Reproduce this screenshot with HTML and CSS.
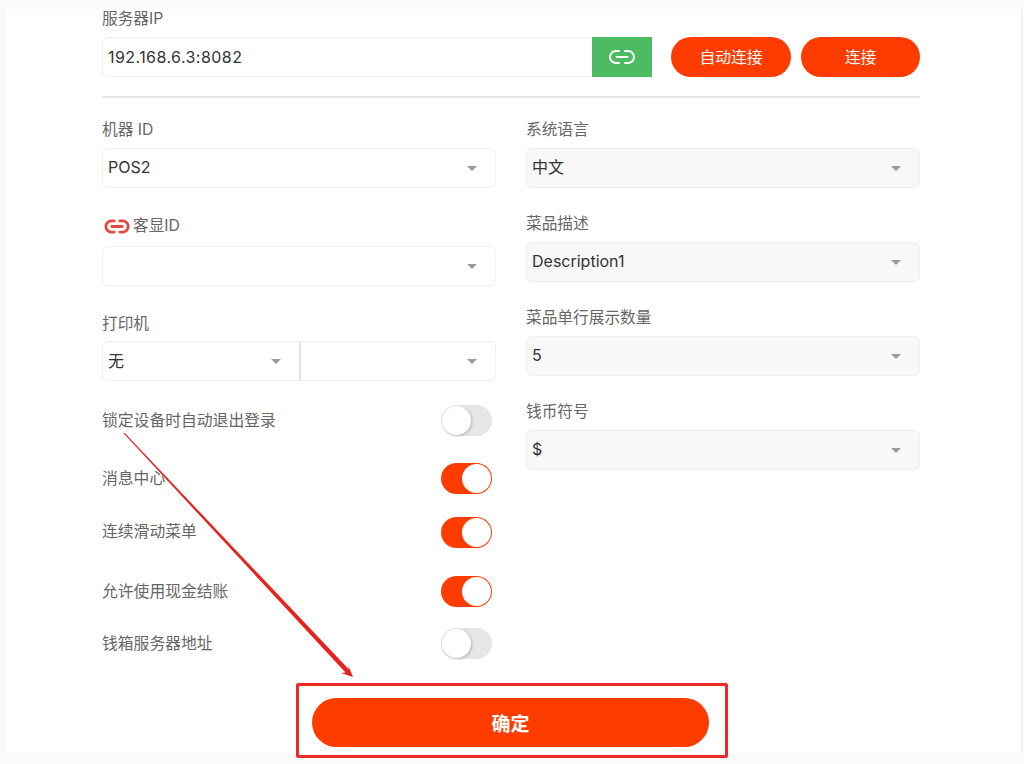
FILE: index.html
```html
<!DOCTYPE html>
<html lang="zh-CN">
<head>
<meta charset="utf-8">
<title>设置</title>
<link rel="stylesheet" href="styles.css">
</head>
<body>
<main class="card">
  <section class="server">
    <div class="label label-server">服务器IP</div>
    <div class="server-row">
      <div class="ip-box">
        <div class="ip-value">192.168.6.3:8082</div>
        <div class="ip-link">
          <svg class="link-icon" viewBox="0 0 28 16" width="28" height="16"><path d="M11 2H8a6 6 0 0 0 0 12h3M17 2h3a6 6 0 0 1 0 12h-3M8.500 8h11" fill="none" stroke="#fff" stroke-width="2" stroke-linecap="round"/></svg>
        </div>
      </div>
      <button class="pill">自动连接</button>
      <button class="pill pill-last">连接</button>
    </div>
  </section>
  <hr class="divider">
  <section class="columns">
    <div class="col">
      <div class="label">机器 ID</div>
      <div class="select select-a"><span>POS2</span><i class="caret"></i></div>
      <div class="label label-icon">
        <svg class="link-icon-red" viewBox="0 0 28 16" width="26" height="15"><path d="M11 2H8a6 6 0 0 0 0 12h3M17 2h3a6 6 0 0 1 0 12h-3M8.500 8h11" fill="none" stroke="#e5483f" stroke-width="3" stroke-linecap="round"/></svg>客显ID
      </div>
      <div class="select select-b"><span></span><i class="caret"></i></div>
      <div class="label">打印机</div>
      <div class="select-pair">
        <div class="pair-item pair-first"><span>无</span><i class="caret"></i></div>
        <div class="pair-item pair-second"><span></span><i class="caret"></i></div>
      </div>
      <div class="switch-list">
        <div class="switch-row row-1"><span>锁定设备时自动退出登录</span><i class="switch"></i></div>
        <div class="switch-row row-2"><span>消息中心</span><i class="switch on"></i></div>
        <div class="switch-row row-3"><span>连续滑动菜单</span><i class="switch on"></i></div>
        <div class="switch-row row-4"><span>允许使用现金结账</span><i class="switch on"></i></div>
        <div class="switch-row row-5"><span>钱箱服务器地址</span><i class="switch"></i></div>
      </div>
    </div>
    <div class="col">
      <div class="label">系统语言</div>
      <div class="select filled"><span class="cjk">中文</span><i class="caret"></i></div>
      <div class="label">菜品描述</div>
      <div class="select filled"><span>Description1</span><i class="caret"></i></div>
      <div class="label">菜品单行展示数量</div>
      <div class="select filled"><span>5</span><i class="caret"></i></div>
      <div class="label">钱币符号</div>
      <div class="select filled"><span>$</span><i class="caret"></i></div>
    </div>
  </section>
  <div class="footer"><button class="confirm">确定</button></div>
</main>
<div class="mark-box"></div>
<svg class="mark-arrow" viewBox="0 0 1024 764" width="1024" height="764">
  <polygon points="123.500,433.300 124.500,432.700 349,669.500 348,665 353,677 341,673 345.500,672.500" fill="#e8211d"/>
</svg>
</body>
</html>
```
FILE: styles.css
```css
* { box-sizing: border-box; }
html, body { margin: 0; height: 764px; overflow: hidden; }
body {
  position: relative;
  background: #fafafd;
  padding: 9px 2px 11px 4px;
  font-family: Inter, "Noto Sans CJK SC", sans-serif;
  color: #333;
}
.card {
  height: 744px;
  background: #fff;
  border-left: 1px solid #f1f1f1;
  border-right: 1px solid #efeff2;
  padding: 0 101px 0 97px;
}
.label {
  height: 20px;
  line-height: 20px;
  font-size: 15.7px;
  color: #666;
}
.columns .label { line-height: 22px; }
.label-server { margin-bottom: 8px; }
.server-row { display: flex; height: 40px; }
.ip-box {
  width: 550px;
  display: flex;
  border: 1px solid #eeeeee;
  border-radius: 6px 0 0 6px;
  background: #fff;
}
.ip-value {
  flex: 1;
  padding-left: 5px;
  line-height: 38px;
  font-size: 16px;
  letter-spacing: .44px;
  color: #333;
}
.ip-link {
  width: 60px;
  margin: -1px -1px -1px 0;
  background: #4cbb62;
  display: flex;
  align-items: center;
  justify-content: center;
}
.pill {
  width: 120px;
  height: 40px;
  margin-left: 19px;
  padding: 0 0 2px;
  border: 0;
  border-radius: 20px;
  background: #ff3c00;
  color: #fff;
  font: 15.8px Inter, "Noto Sans CJK SC", sans-serif;
}
.pill-last { margin-left: 10px; width: 119px; }
.divider {
  height: 2px;
  margin: 19px 0 21px;
  border: 0;
  background: #e6e6e6;
}
.columns { display: flex; gap: 30px; }
.col { width: 394px; }
.select {
  height: 40px;
  margin: 9px 0 25px;
  display: flex;
  align-items: center;
  justify-content: space-between;
  padding: 0 18px 0 5px;
  border: 1px solid #eeeeee;
  border-radius: 6px;
  font-size: 16px;
  color: #333;
}
.select span { padding-bottom: 2px; }
.select .cjk { padding-bottom: 4px; }
.filled { background: #f8f8f8; }
.select-a { margin-bottom: 28px; }
.select-b { margin: 10px 0 27px; }
.label-icon { display: flex; align-items: center; }
.link-icon-red { margin: 0 3px 0 2px; }
.caret {
  width: 0;
  height: 0;
  border: 5px solid transparent;
  border-top: 5px solid #999;
  border-bottom: 0;
}
.select-pair {
  display: flex;
  height: 40px;
  margin-top: 8px;
  border: 1px solid #eeeeee;
  border-radius: 6px;
  font-size: 16px;
}
.pair-item {
  display: flex;
  align-items: center;
  justify-content: space-between;
}
.pair-item span { padding-bottom: 2px; }
.pair-first { width: 196px; padding: 0 18px 0 5px; }
.pair-second {
  flex: 1;
  padding: 0 18px 0 5px;
  border-left: 2px solid #e4e4e4;
}
.switch-list { display: flex; flex-direction: column; margin-top: 24px; }
.switch-row {
  display: flex;
  justify-content: space-between;
  align-items: center;
  height: 31px;
  padding-right: 4px;
  font-size: 15.8px;
  color: #666;
}
.switch-row span { padding-bottom: 3px; }
.row-3 span { padding-bottom: 5px; }
.row-2 { margin-top: 27px; }
.row-3 { margin-top: 23px; }
.row-4 { margin-top: 28px; }
.row-5 { margin-top: 21px; }
.switch {
  position: relative;
  display: block;
  width: 51px;
  height: 31px;
  border-radius: 16px;
  background: #e6e6e9;
}
.switch::after {
  content: "";
  position: absolute;
  left: 1px;
  top: 1px;
  width: 29px;
  height: 29px;
  border-radius: 50%;
  background: #fff;
  box-shadow: 1px 1px 3px rgba(0, 0, 0, .22);
}
.switch.on { background: #ff3c00; }
.switch.on::after { left: 21px; box-shadow: none; }
.footer { display: flex; justify-content: center; margin-top: 39px; padding-right: 1px; }
.confirm {
  width: 397px;
  height: 49px;
  border: 0;
  border-radius: 25px;
  background: #ff3c00;
  color: #fff;
  font: 600 19px Inter, "Noto Sans CJK SC", sans-serif;
}
.mark-box {
  position: absolute;
  left: 296px;
  top: 683px;
  width: 432px;
  height: 75px;
  border: 3px solid #ee2a24;
  border-radius: 2px;
}
.mark-arrow { position: absolute; left: 0; top: 0; pointer-events: none; }
```
